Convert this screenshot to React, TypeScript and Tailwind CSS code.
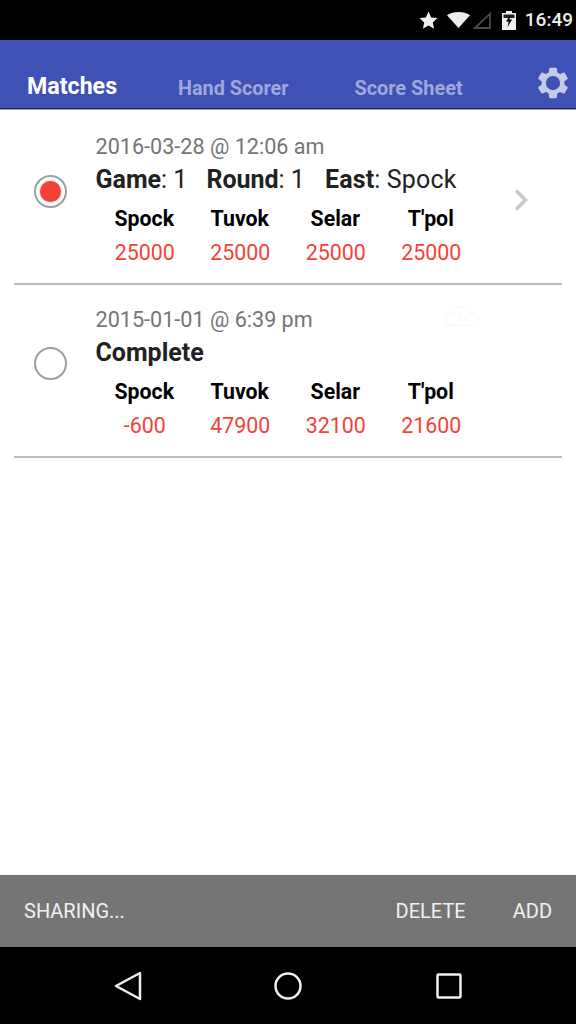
import React from "react";

const Scores: React.FC<{ scores: string[] }> = ({ scores }) => {
  const names = ["Spock", "Tuvok", "Selar", "T'pol"];
  return (
    <div className="grid grid-cols-[repeat(4,95.5px)] mt-[9px] pl-[1px]">
      {names.map((name, i) => (
        <div key={name} className="flex flex-col items-center">
          <span className="text-[21.3px] leading-[28px] font-bold text-black">{name}</span>
          <span className="text-[21.4px] leading-[28px] mt-[6px] ml-[1px] text-[#F44336]">{scores[i]}</span>
        </div>
      ))}
    </div>
  );
};

const MatchRow: React.FC<{
  date: string;
  selected?: boolean;
  radioTop: string;
  scores: string[];
  children: React.ReactNode;
  right?: React.ReactNode;
}> = ({ date, selected, radioTop, scores, children, right }) => (
  <div className="mx-[14px] h-[173px] border-b-2 border-[#BDBDBD] flex">
    <div className={`w-[82px] shrink-0 pl-[20px] ${radioTop}`}>
      <div className="w-[33px] h-[33px] rounded-full border-2 border-[#9E9E9E] flex items-center justify-center">
        {selected && <div className="w-[21px] h-[21px] rounded-full bg-[#F44336] shadow-[0_0_3px_#bdbdbd]" />}
      </div>
    </div>
    <div className="flex-1 pt-[21px] relative -ml-[0.5px]">
      <div className="text-[21.6px] leading-[28px] text-[#757575]">{date}</div>
      <div className="text-[25px] leading-[32px] mt-[3px] text-[#212121] flex">{children}</div>
      <Scores scores={scores} />
      {right}
    </div>
  </div>
);

export default function App() {
  return (
    <div className="w-[576px] h-[1024px] flex flex-col bg-white font-['Roboto',sans-serif] overflow-hidden">
      {/* status bar */}
      <div className="h-[40px] bg-black flex items-center justify-end pr-[3px] text-white">
        <svg width="19" height="18" viewBox="0 0 19 18" fill="#eeeeee" className="mr-[9px]">
          <path d="M9.500 0.500l2.700 5.900 6.300.7-4.700 4.300 1.300 6.300-5.600-3.200-5.600 3.200 1.300-6.300L0.500 7.100l6.300-.7z" />
        </svg>
        <svg width="23" height="16" viewBox="0 0 23 16" className="mr-[3px]">
          <path d="M11.500 16L0 3.200C3.200 1 7.300 0 11.500 0S19.800 1 23 3.200z" fill="#eeeeee" />
        </svg>
        <svg width="18" height="17" viewBox="0 0 18 17" className="mr-[11px]">
          <path d="M1.800 16L17 1.800V16z" fill="none" stroke="#4a4a4a" strokeWidth="1.800" />
        </svg>
        <svg width="14" height="19" viewBox="0 0 14 19" className="mr-[9px]">
          <path d="M4 0h6v2h4v17H0V2h4z" fill="#eeeeee" />
          <path d="M1.500 3.500h11V7h-11z" fill="#222" />
          <path d="M8.500 3.500L4 10.500h2.600l-1 5.500 4.500-7.500H7.500z" fill="#000" />
        </svg>
        <span className="text-[19px] font-medium text-[#eeeeee]">16:49</span>
      </div>

      {/* tabs */}
      <div className="h-[69px] bg-[#3F51B5] border-b border-[#252a55] shadow-[0_1px_0_#9e9e9e] flex items-center relative">
        <span className="ml-[27px] mt-[25px] text-[23.2px] font-bold text-white">Matches</span>
        <span className="ml-[61px] mt-[29px] text-[19.8px] font-bold text-[#9FA8DA]">Hand Scorer</span>
        <span className="ml-[66px] mt-[29px] text-[19.900px] font-bold text-[#9FA8DA]">Score Sheet</span>
        <svg width="38" height="38" viewBox="0 0 24 24" fill="#C5CAE9" className="absolute right-[4px] top-[24px]">
          <path
            fillRule="evenodd"
            d="M19.140 12.940c.04-.3.060-.61.060-.94 0-.32-.020-.64-.070-.94l2.030-1.580a.49.49 0 0 0 .12-.61l-1.920-3.320a.488.488 0 0 0-.59-.22l-2.390.96c-.5-.38-1.030-.7-1.620-.94l-.36-2.540a.484.484 0 0 0-.48-.41h-3.840c-.24 0-.43.170-.47.410l-.36 2.540c-.59.240-1.130.570-1.620.94l-2.390-.96c-.22-.08-.47 0-.59.220L2.740 8.870c-.12.210-.08.470.12.610l2.030 1.580c-.05.300-.09.630-.09.940s.020.640.070.940l-2.030 1.580a.49.49 0 0 0-.12.610l1.920 3.320c.12.220.37.290.59.220l2.390-.96c.5.380 1.030.7 1.620.94l.36 2.540c.05.240.24.410.48.410h3.840c.24 0 .44-.17.47-.41l.36-2.540c.59-.24 1.130-.56 1.620-.94l2.390.96c.22.080.47 0 .59-.22l1.920-3.320c.12-.22.070-.47-.12-.61l-2.010-1.580zM12 16.500A4.500 4.500 0 1 1 12 7.500a4.500 4.500 0 0 1 0 9z"
          />
        </svg>
      </div>

      {/* match list */}
      <div className="flex-1 pt-[3px]">
        <MatchRow
          date="2016-03-28 @ 12:06 am"
          selected
          radioTop="pt-[63px]"
          scores={["25000", "25000", "25000", "25000"]}
          right={
            <svg width="18" height="24" viewBox="0 0 18 24" className="absolute right-[31px] top-[76px]">
              <path d="M3 2.500l9.500 9.500-9.500 9.500" fill="none" stroke="#C7C7CC" strokeWidth="3.500" />
            </svg>
          }
        >
          <span><b>Game</b>: 1</span>
          <span className="ml-[19px]"><b>Round</b>: 1</span>
          <span className="ml-[20px] tracking-[0.15px]"><b>East</b>: Spock</span>
        </MatchRow>
        <MatchRow
          date="2015-01-01 @ 6:39 pm"
          radioTop="pt-[62px]"
          scores={["-600", "47900", "32100", "21600"]}
          right={
            <svg width="38" height="24" viewBox="0 0 38 24" fill="none" stroke="#F4F4F4" strokeWidth="1" className="absolute left-[348px] top-[19px]">
              <path d="M8 21H6a5 5 0 0 1-1-10c2-1 3-3 5-5 3-4 10-4 13 0 2 2 2 3 3 4 2-1 6 0 7 2 2 3 0 8-3 9z" />
              <circle cx="19" cy="13" r="4" strokeDasharray="2 1" />
            </svg>
          }
        >
          <b>Complete</b>
        </MatchRow>
      </div>

      {/* action bar */}
      <div className="h-[72px] bg-[#757575] flex items-center text-[20px] text-white/90 px-[24px]">
        <span>SHARING...</span>
        <span className="ml-auto">DELETE</span>
        <span className="ml-[47px]">ADD</span>
      </div>

      {/* nav bar */}
      <div className="h-[77px] bg-black flex items-center pl-[114px]">
        <svg width="28" height="32" viewBox="0 0 28 32" fill="none" stroke="#eeeeee" strokeWidth="2.500" strokeLinejoin="round" className="mr-[131px]">
          <path d="M26 3v26L2 16z" />
        </svg>
        <svg width="30" height="30" viewBox="0 0 30 30" fill="none" stroke="#eeeeee" strokeWidth="2.500" className="mr-[133px]">
          <circle cx="15" cy="15" r="12.500" />
        </svg>
        <svg width="26" height="26" viewBox="0 0 26 26" fill="none" stroke="#eeeeee" strokeWidth="2.500" strokeLinejoin="round">
          <rect x="1.500" y="1.500" width="23" height="23" rx="1" />
        </svg>
      </div>
    </div>
  );
}
